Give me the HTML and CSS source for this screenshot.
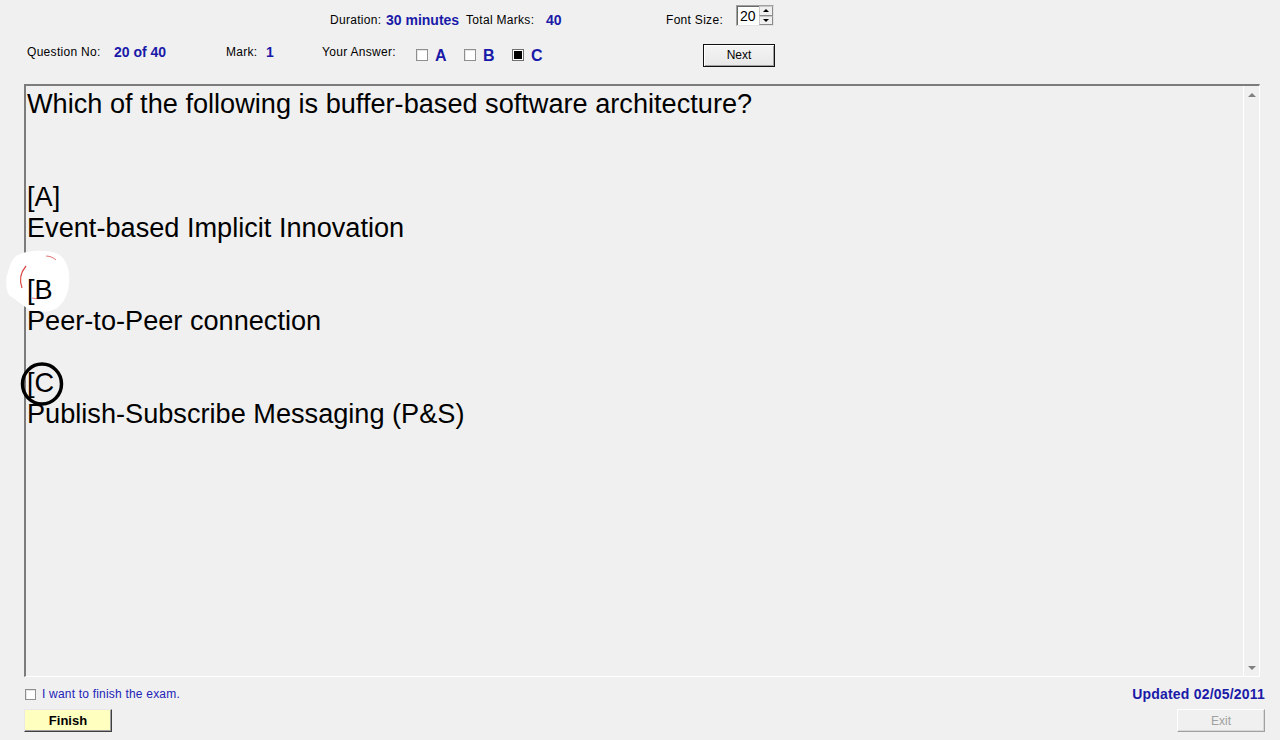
FILE: index.html
```html
<!DOCTYPE html>
<html>
<head>
<meta charset="utf-8">
<title>Exam</title>
<link rel="stylesheet" href="styles.css">
</head>
<body>
<div class="page">
  <div class="row1">
    <span class="lbl w-dur">Duration:</span>
    <span class="val w-durv">30 minutes</span>
    <span class="lbl w-tm">Total Marks:</span>
    <span class="val w-tmv">40</span>
    <span class="lbl w-fs">Font Size:</span>
    <div class="spin">
      <span class="spin-val">20</span>
      <div class="spin-btns">
        <div class="spin-btn"><span class="tri-up small"></span></div>
        <div class="spin-btn"><span class="tri-down small"></span></div>
      </div>
    </div>
  </div>
  <div class="row2">
    <span class="lbl up w-qn">Question No:</span>
    <span class="val up w-qnv">20 of 40</span>
    <span class="lbl up w-mk">Mark:</span>
    <span class="val up w-mkv">1</span>
    <span class="lbl up w-ya">Your Answer:</span>
    <span class="opt"><span class="cb"></span><span class="opt-letter">A</span></span>
    <span class="opt"><span class="cb"></span><span class="opt-letter">B</span></span>
    <span class="opt"><span class="cb checked"></span><span class="opt-letter">C</span></span>
    <button class="btn next">Next</button>
  </div>

  <div class="qbox">
    <div class="qtext">
      <div>Which of the following is buffer-based software architecture?</div>
      <div>&nbsp;</div>
      <div>&nbsp;</div>
      <div>[A]</div>
      <div>Event-based Implicit Innovation</div>
      <div>&nbsp;</div>
      <div>[B</div>
      <div>Peer-to-Peer connection</div>
      <div>&nbsp;</div>
      <div>[C</div>
      <div>Publish-Subscribe Messaging (P&amp;S)</div>
    </div>
    <div class="vscroll">
      <div class="sarrow"><span class="tri-up"></span></div>
      <div class="strack"></div>
      <div class="sarrow"><span class="tri-down"></span></div>
    </div>
  </div>

  <div class="foot1">
    <label class="finish-check"><span class="cb"></span><span class="fc-text">I want to finish the exam.</span></label>
    <span class="updated">Updated 02/05/2011</span>
  </div>
  <div class="foot2">
    <button class="btn finish">Finish</button>
    <button class="btn exit" disabled>Exit</button>
  </div>

  <svg class="blob" width="80" height="80" viewBox="0 0 80 80">
    <path d="M14 8 C24 2 46 1 56 6 C66 12 68 24 67 36 C66 48 60 60 48 63 C38 65 28 63 22 58 C16 54 12 50 8 48 C4 44 3 32 6 24 C8 16 10 12 14 8 Z" fill="#ffffff"/>
    <path d="M24 18 C19 24 17 32 20 40" stroke="#d01818" stroke-width="1.2" fill="none" opacity="0.8"/>
    <path d="M44 8 C48 8 52 10 54 12" stroke="#d01818" stroke-width="1" fill="none" opacity="0.6"/>
    <path d="M30 50 C34 51 40 51 44 49" stroke="#d01818" stroke-width="1" fill="none" opacity="0.6"/>
  </svg>
  <svg class="ring" width="50" height="50" viewBox="0 0 50 50">
    <ellipse cx="25" cy="25" rx="19.5" ry="20" fill="none" stroke="#000" stroke-width="3.5"/>
  </svg>
</div>
</body>
</html>
```

FILE: styles.css
```css
html, body {
  margin: 0;
  padding: 0;
}
body {
  background: #f0f0f0;
  font-family: "Liberation Sans", Arial, sans-serif;
  font-size: 12px;
  color: #000;
  overflow: hidden;
}
.page {
  position: relative;
  width: 1280px;
  height: 740px;
}
.row1 {
  display: flex;
  align-items: center;
  height: 40px;
  padding-left: 330px;
}
.row2 {
  display: flex;
  align-items: center;
  height: 30px;
  padding-left: 27px;
}
.lbl {
  font-size: 12px;
  letter-spacing: 0.3px;
  white-space: nowrap;
}
.val {
  font-size: 14px;
  font-weight: bold;
  color: #1a1aa8;
  white-space: nowrap;
}
.up {
  margin-bottom: 6px;
}
.w-dur { width: 56px; }
.w-durv { width: 80px; }
.w-tm { width: 80px; }
.w-tmv { width: 120px; }
.w-fs { width: 70px; }
.w-qn { width: 87px; }
.w-qnv { width: 112px; }
.w-mk { width: 40px; }
.w-mkv { width: 56px; }
.w-ya { width: 94px; }

.spin {
  align-self: flex-start;
  margin-top: 5px;
  width: 38px;
  height: 21px;
  box-sizing: border-box;
  background: #fff;
  border-top: 1px solid #a0a0a0;
  border-left: 1px solid #a0a0a0;
  border-right: 1px solid #e3e3e3;
  border-bottom: 1px solid #e3e3e3;
  box-shadow: inset 1px 1px 0 #696969;
  display: flex;
  align-items: center;
}
.spin-val {
  font-size: 14px;
  padding-left: 3px;
  width: 19px;
}
.spin-btns {
  display: flex;
  flex-direction: column;
  width: 14px;
  height: 19px;
  margin-left: 1px;
}
.spin-btn {
  flex: 1;
  background: #f0f0f0;
  border: 1px solid #c8c8c8;
  border-right-color: #8a8a8a;
  border-bottom-color: #8a8a8a;
  display: flex;
  align-items: center;
  justify-content: center;
  box-sizing: border-box;
}
.tri-up, .tri-down {
  width: 0;
  height: 0;
  border-left: 4px solid transparent;
  border-right: 4px solid transparent;
}
.tri-up { border-bottom: 4px solid #808080; }
.tri-down { border-top: 4px solid #808080; }
.tri-up.small { border-bottom: 3px solid #000; border-left-width: 3px; border-right-width: 3px; }
.tri-down.small { border-top: 3px solid #000; border-left-width: 3px; border-right-width: 3px; }

.opt {
  display: flex;
  align-items: center;
  width: 48px;
}
.cb {
  display: inline-block;
  width: 12px;
  height: 12px;
  box-sizing: border-box;
  background: #fff;
  border: 1px solid #8e8f8f;
  box-shadow: inset 1px 1px 0 #e6e6e6;
}
.cb.checked {
  background: #000;
  box-shadow: inset 0 0 0 1px #fff;
  border-color: #707070;
}
.opt-letter {
  margin-left: 7px;
  font-size: 16px;
  font-weight: bold;
  color: #1a1aa8;
  margin-top: 2px;
}
.btn {
  font-family: "Liberation Sans", Arial, sans-serif;
  font-size: 12px;
  padding: 0;
  box-sizing: border-box;
  height: 23px;
  cursor: default;
}
.next {
  margin-left: 143px;
  width: 72px;
  background: linear-gradient(#f4f4f4, #e8e8e8);
  border: 1px solid #101010;
  box-shadow: inset 1px 1px 0 #fff, inset -1px -1px 0 #a0a0a0;
  color: #000;
}

.qbox {
  margin: 14px 0 0 24px;
  width: 1236px;
  height: 593px;
  box-sizing: border-box;
  border-top: 2px solid #7c7c7c;
  border-left: 2px solid #7c7c7c;
  border-right: 1px solid #ffffff;
  border-bottom: 1px solid #ffffff;
  display: flex;
}
.qtext {
  position: relative;
  z-index: 2;
  flex: 1;
  padding: 2px 0 0 1px;
  font-size: 27.15px;
  line-height: 31px;
  white-space: nowrap;
}
.vscroll {
  width: 15px;
  border-left: 1px solid #ffffff;
  display: flex;
  flex-direction: column;
  background: #f0f0f0;
}
.sarrow {
  height: 17px;
  display: flex;
  align-items: center;
  justify-content: center;
}
.strack { flex: 1; }

.foot1 {
  display: flex;
  justify-content: space-between;
  align-items: center;
  height: 14px;
  margin-top: 10px;
  padding: 0 15px 0 25px;
}
.finish-check {
  display: flex;
  align-items: center;
}
.finish-check .cb {
  width: 11px;
  height: 11px;
}
.fc-text {
  margin-left: 6px;
  color: #2323b8;
  font-size: 12px;
  letter-spacing: 0.2px;
}
.updated {
  font-size: 14px;
  font-weight: bold;
  color: #1a1aa8;
  letter-spacing: 0.2px;
}
.foot2 {
  display: flex;
  justify-content: space-between;
  margin-top: 8px;
  padding: 0 15px 0 24px;
}
.finish {
  width: 88px;
  background: #ffffc0;
  font-size: 13px;
  font-weight: bold;
  color: #000;
  border: 1px solid;
  border-color: #e8e8e8 #404040 #404040 #e8e8e8;
  box-shadow: inset -1px -1px 0 #a0a0a0;
}
.exit {
  width: 88px;
  background: #f0f0f0;
  color: #a0a0a0;
  border: 1px solid;
  border-color: #ffffff #a0a0a0 #a0a0a0 #ffffff;
  box-shadow: inset -1px -1px 0 #d8d8d8;
}

.blob {
  position: absolute;
  left: 2px;
  top: 248px;
  z-index: 1;
}
.ring {
  position: absolute;
  left: 17px;
  top: 359px;
  z-index: 3;
}
```
